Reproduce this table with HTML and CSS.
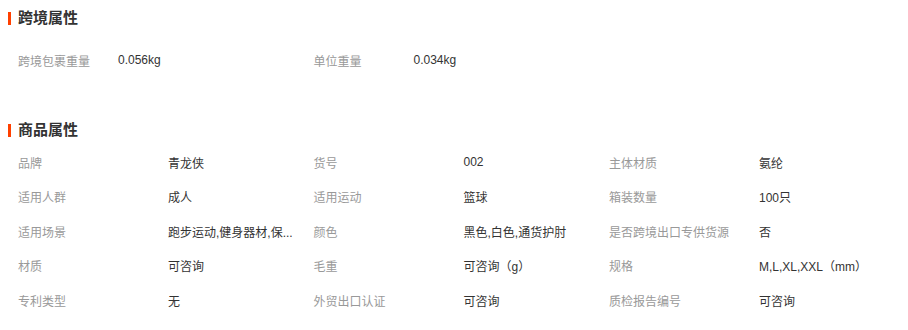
FILE: index.html
```html
<!DOCTYPE html>
<html lang="zh-CN">
<head>
<meta charset="utf-8">
<title>属性</title>
<link rel="stylesheet" href="styles.css">
</head>
<body>
<section class="section first">
  <h2 class="title">跨境属性</h2>
  <div class="grid grid-cross">
    <div class="label">跨境包裹重量</div><div class="value">0.056kg</div>
    <div class="label">单位重量</div><div class="value">0.034kg</div>
  </div>
</section>
<section class="section second">
  <h2 class="title">商品属性</h2>
  <div class="grid grid-attr">
    <div class="label">品牌</div><div class="value">青龙侠</div>
    <div class="label">货号</div><div class="value">002</div>
    <div class="label">主体材质</div><div class="value">氨纶</div>

    <div class="label">适用人群</div><div class="value">成人</div>
    <div class="label">适用运动</div><div class="value">篮球</div>
    <div class="label">箱装数量</div><div class="value">100只</div>

    <div class="label">适用场景</div><div class="value">跑步运动,健身器材,保...</div>
    <div class="label">颜色</div><div class="value">黑色,白色,通货护肘</div>
    <div class="label">是否跨境出口专供货源</div><div class="value">否</div>

    <div class="label">材质</div><div class="value">可咨询</div>
    <div class="label">毛重</div><div class="value">可咨询（g）</div>
    <div class="label">规格</div><div class="value">M,L,XL,XXL（mm）</div>

    <div class="label">专利类型</div><div class="value">无</div>
    <div class="label">外贸出口认证</div><div class="value">可咨询</div>
    <div class="label">质检报告编号</div><div class="value">可咨询</div>
  </div>
</section>
</body>
</html>
```
FILE: styles.css
```css
html, body {
  margin: 0;
  padding: 0;
  background: #fff;
}
body {
  width: 908px;
  font-family: "Liberation Sans", "Noto Sans CJK SC", sans-serif;
  font-size: 12px;
  color: #333;
}
.section {
  padding-left: 8px;
}
.first {
  padding-top: 8px;
}
.second {
  margin-top: 43px;
}
.title {
  margin: 0;
  height: 20px;
  line-height: 20px;
  font-size: 15px;
  font-weight: bold;
  color: #333;
  display: flex;
  align-items: center;
  gap: 7px;
}
.title::before {
  content: "";
  display: block;
  width: 3px;
  height: 13px;
  background: #ff4000;
}
.grid {
  display: grid;
  padding-left: 10px;
  align-items: center;
}
.grid-cross {
  margin-top: 15px;
  grid-auto-rows: 34px;
  grid-template-columns: 100px 195.5px 100px 195.5px;
}
.grid-attr {
  margin-top: 5px;
  grid-auto-rows: 34.5px;
  grid-template-columns: 150px 145.5px 150px 145.5px 150px 145.5px;
}
.label {
  color: #999;
  white-space: nowrap;
}
.value {
  color: #333;
  white-space: nowrap;
}
```
